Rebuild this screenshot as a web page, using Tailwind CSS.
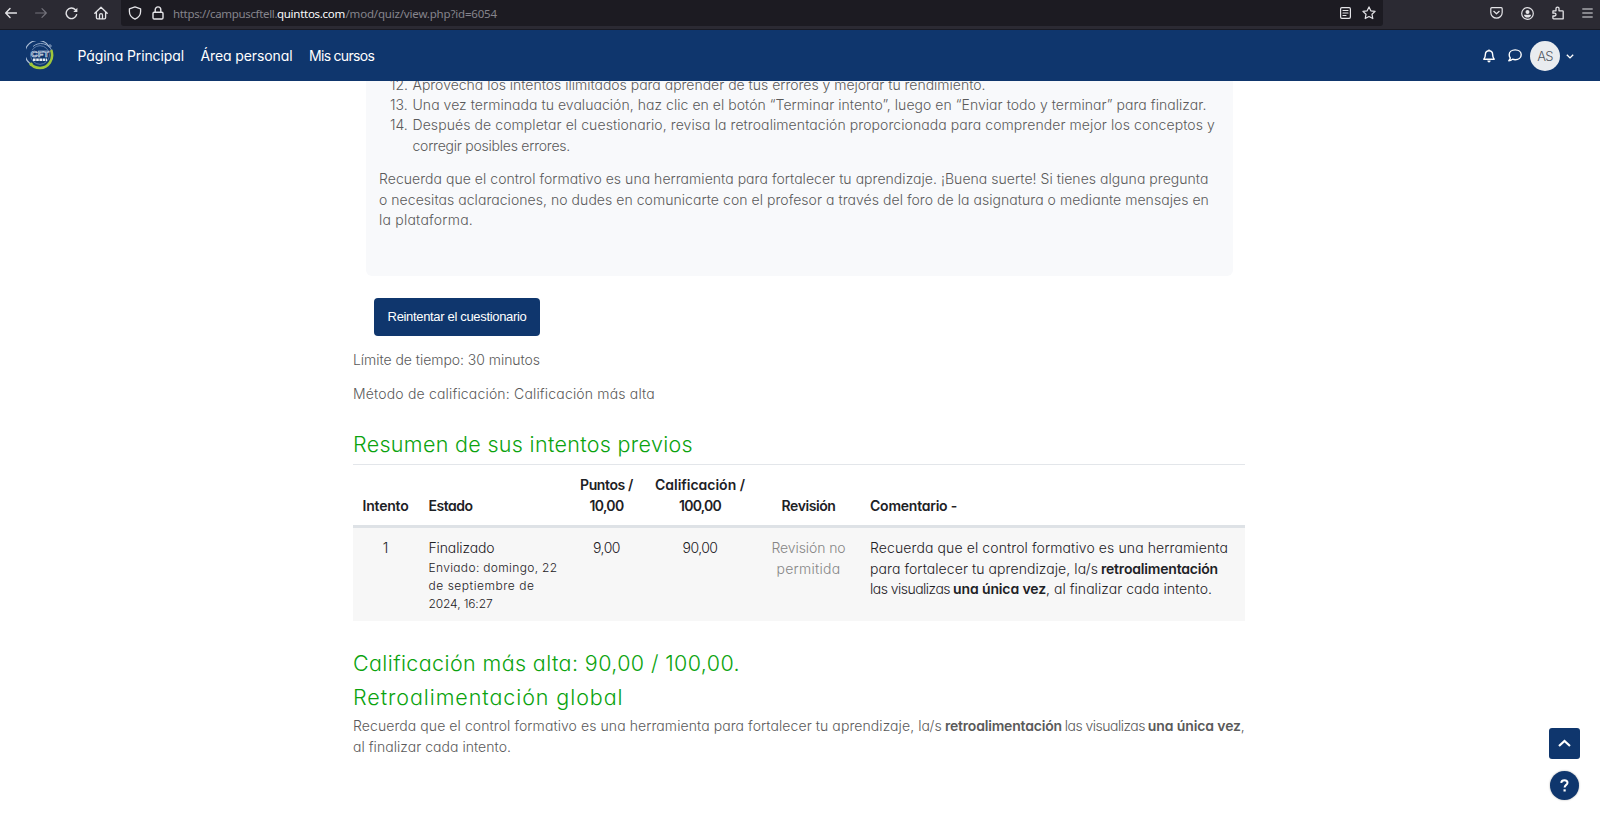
<!DOCTYPE html>
<html lang="es">
<head>
<meta charset="utf-8">
<title>Cuestionario</title>
<script src="https://cdn.jsdelivr.net/npm/@tailwindcss/browser@4"></script>
</head>
<body class="h-screen overflow-hidden flex flex-col bg-white font-['Inter',sans-serif] [font-feature-settings:'cv11'] text-[14px] leading-[20.3px] font-light text-[#5a5a5a] whitespace-nowrap">

<!-- Browser toolbar -->
<div class="h-[30px] shrink-0 bg-[#2b2a33] border-b border-[#1a1a22] flex items-start text-[#e4e4e8]">
  <div class="w-[121px] h-[26px] flex items-center shrink-0">
    <svg class="w-3 h-3 ml-[5px]" viewBox="0 0 12 12" fill="none" stroke="currentColor" stroke-width="1.4" stroke-linecap="round" stroke-linejoin="round"><path d="M11.4 6H.8M5 1.6L.7 6 5 10.4"/></svg>
    <svg class="w-3 h-3 ml-[18px] text-[#74737c]" viewBox="0 0 12 12" fill="none" stroke="currentColor" stroke-width="1.2" stroke-linecap="round" stroke-linejoin="round"><path d="M.6 6h10.6M7 1.6L11.3 6 7 10.4"/></svg>
    <svg class="w-[13px] h-[13px] ml-[18px]" viewBox="0 0 13 13" fill="none" stroke="currentColor" stroke-width="1.4" stroke-linecap="round"><path d="M11.6 7.6a5.3 5.3 0 1 1-1.2-4.9l.6.6"/><path d="M12.4.8v4.1H8.3z" fill="currentColor" stroke="none"/></svg>
    <svg class="w-[14px] h-[14px] ml-[16px]" viewBox="0 0 14 14" fill="none" stroke="currentColor" stroke-width="1.3" stroke-linecap="round" stroke-linejoin="round"><path d="M.8 7.2L7 1.2l6.2 6M2.4 6v5.6c0 .8.4 1.2 1.1 1.2h7c.7 0 1.1-.4 1.1-1.2V6"/><path d="M5.5 12.6V9.2c0-2 3-2 3 0v3.4"/></svg>
  </div>
  <div class="w-[1262px] h-[26px] bg-[#1c1b22] rounded-b-[3px] flex items-center shrink-0">
    <svg class="w-[14px] h-[14px] ml-[7px]" viewBox="0 0 14 14" fill="none" stroke="currentColor" stroke-width="1.3" stroke-linejoin="round"><path d="M7 .9l5.6 1.9v2.7c0 3.5-2.2 6.2-5.6 7.7C3.600 11.700 1.400 9 1.400 5.500V2.800z"/></svg>
    <svg class="w-[12px] h-[14px] ml-[10px]" viewBox="0 0 12 14" fill="none" stroke="currentColor" stroke-width="1.4"><rect x="1" y="6.300" width="10" height="6.700" rx="1.200"/><path d="M3.200 6.300V3.700a2.800 2.800 0 0 1 5.600 0v2.600"/></svg>
    <div class="ml-[9px] flex pt-px font-['Noto_Sans',sans-serif] font-normal text-[11.5px] leading-4 text-[#85848c]"><span class="w-[104px] tracking-[-0.33px]">https://campuscftell.</span><span class="w-[68.5px] tracking-[-0.28px] text-[#fbfbfe]">quinttos.com</span><span class="tracking-[-0.18px]">/mod/quiz/view.php?id=6054</span></div>
    <svg class="w-[11px] h-[12px] ml-auto" viewBox="0 0 11 12" fill="none" stroke="currentColor" stroke-width="1.2" stroke-linecap="round"><rect x=".6" y=".6" width="9.800" height="10.800" rx="1.300"/><path d="M3 3.500h5M3 6h5M3 8.500h3"/></svg>
    <svg class="w-[14px] h-[14px] ml-[11px] mr-[7px]" viewBox="0 0 14 14" fill="none" stroke="currentColor" stroke-width="1.200" stroke-linejoin="round"><path d="M7 .9l1.850 3.900 4.250.55-3.100 2.950.8 4.250L7 10.500l-3.800 2.050.8-4.250L.9 5.350l4.250-.55z"/></svg>
  </div>
  <div class="flex-1 h-[26px] flex items-center justify-end">
    <svg class="w-[13px] h-[12px]" viewBox="0 0 13 12" fill="none" stroke="currentColor" stroke-width="1.200" stroke-linecap="round" stroke-linejoin="round"><path d="M1.800.7h9.400c.6 0 1 .4 1 1v3.800a5.700 5.700 0 0 1-11.400 0V1.700c0-.6.4-1 1-1z"/><path d="M3.800 4.300l2.700 2.500 2.700-2.500"/></svg>
    <svg class="w-[13px] h-[13px] ml-[18px]" viewBox="0 0 13 13" fill="none" stroke="currentColor" stroke-width="1.200"><circle cx="6.500" cy="6.500" r="5.800"/><circle cx="6.500" cy="4.900" r="2" fill="currentColor" stroke="none"/><path d="M3 7.700h7c0 1.700-1.500 2.900-3.500 2.900S3 9.400 3 7.700z" fill="currentColor" stroke="none"/></svg>
    <svg class="w-[12px] h-[14px] ml-[18px]" viewBox="0 0 12 14" fill="none" stroke="currentColor" stroke-width="1.300" stroke-linejoin="round"><path d="M1 4.800h3V2.600a1.500 1.500 0 0 1 3 0v2.200h3.400c.5 0 .8.3.8.8v7.200H1.600c-.4 0-.7-.3-.7-.7V10h1.700a1.400 1.400 0 0 0 0-2.800H.9z"/></svg>
    <svg class="w-[11px] h-[10px] ml-[18px] mr-[7px]" viewBox="0 0 11 10" fill="none" stroke="currentColor" stroke-width="1.200"><path d="M.3 1h10.400M.3 5h10.400M.3 9h10.400"/></svg>
  </div>
</div>

<!-- Site navigation -->
<nav class="h-[51px] shrink-0 bg-[#0f366d] flex items-center text-white">
  <svg class="w-[28px] h-[30px] ml-[26px]" viewBox="0 0 28 30" fill="none"><path d="M23 5.500A13 13 0 1 0 4.500 23" stroke="#a9bbd4" stroke-width="1.200"/><path d="M25.800 9.500A12 12 0 0 0 7 5.500" stroke="#8fa6c6" stroke-width="1"/><circle cx="14" cy="14" r="9.300" stroke="#6f8cb4" stroke-width=".8"/><path d="M25.200 9c3.300 9.500-3 18-11.200 18-4.600 0-8-2-9.800-5" stroke="#9fc63b" stroke-width="2.600"/><circle cx="5.200" cy="23.400" r="1.700" fill="#9fc63b"/><circle cx="24" cy="5" r="1.200" stroke="#a9bbd4" stroke-width=".8"/><rect x="5" y="9" width="18" height="7.500" fill="#0f366d" opacity=".7"/><text x="5" y="16" fill="none" stroke="#d5deea" stroke-width=".7" font-family="Liberation Sans" font-weight="700" font-size="9" textLength="18">CFT</text><path d="M7 18.700h14" stroke="#e8edf4" stroke-width="2.600" stroke-dasharray="2.600 .6"/></svg>
  <a class="ml-[23.500px] w-[123px] pt-[2px] font-normal tracking-[-0.108px]">Página Principal</a>
  <a class="w-[108.5px] pt-[2px] font-normal tracking-[-0.108px]">Área personal</a>
  <a class="pt-[2px] font-normal tracking-[-0.7px]">Mis cursos</a>
  <svg class="w-[12px] h-[14px] ml-auto" viewBox="0 0 12 14" fill="none" stroke="currentColor" stroke-width="1.400" stroke-linejoin="round"><path d="M6 1.700c-2.300 0-3.600 1.600-3.600 3.600 0 2.600-.6 3.700-1.600 4.900h10.400c-1-1.200-1.600-2.300-1.600-4.900 0-2-1.300-3.600-3.600-3.600zM6 .4v1.300"/><path d="M4.300 11.600h3.400c-.2 1.300-.8 1.800-1.700 1.800s-1.500-.5-1.700-1.800z" fill="currentColor" stroke="none"/></svg>
  <svg class="w-[14px] h-[13px] ml-[13px]" viewBox="0 0 14 13" fill="none" stroke="currentColor" stroke-width="1.400" stroke-linejoin="round"><path d="M7.200.9c3.400 0 6 2.100 6 4.900s-2.600 4.900-6 4.900c-1 0-1.900-.2-2.700-.5-1 .8-2.200 1.400-3.700 1.500.8-.9 1.300-1.700 1.500-2.700-.7-.9-1.100-2-1.100-3.200C1.200 3 3.800.9 7.200.9z"/></svg>
  <div class="ml-[8px] w-[30px] h-[30px] rounded-full bg-[#e9ecef] text-[#4f5660] text-[13px] font-light tracking-[-0.8px] flex items-center justify-center pt-px">AS</div>
  <svg class="w-[8px] h-[5px] ml-[6px] mt-[2px] mr-[26px]" viewBox="0 0 8 5" fill="none" stroke="currentColor" stroke-width="1.400"><path d="M.8.8L4 3.900 7.200.8"/></svg>
</nav>

<main class="flex-1 overflow-hidden flex flex-col items-start pl-[353px]">
  <section class="shrink-0 -mt-[6.3px] ml-[13px] w-[867px] bg-[#f8f9fb] rounded-b-[6px] pl-[13px] pb-[45.4px]">
    <ol class="flex flex-col">
      <li class="flex"><span class="w-[33.5px] shrink-0 pl-[11px]">12.</span><span class="tracking-[-0.01px]">Aprovecha los intentos ilimitados para aprender de tus errores y mejorar tu rendimiento.</span></li>
      <li class="flex"><span class="w-[33.5px] shrink-0 pl-[11px]">13.</span><span class="tracking-[0.044px]">Una vez terminada tu evaluación, haz clic en el botón “Terminar intento”, luego en “Enviar todo y terminar” para finalizar.</span></li>
      <li class="flex"><span class="w-[33.5px] shrink-0 pl-[11px]">14.</span><span><span class="tracking-[0.081px]">Después de completar el cuestionario, revisa la retroalimentación proporcionada para comprender mejor los conceptos y</span><br><span class="tracking-[-0.234px]">corregir posibles errores.</span></span></li>
    </ol>
    <p class="mt-[13.4px]"><span class="tracking-[0.042px]">Recuerda que el control formativo es una herramienta para fortalecer tu aprendizaje. ¡Buena suerte! Si tienes alguna pregunta</span><br><span class="tracking-[0.049px]">o necesitas aclaraciones, no dudes en comunicarte con el profesor a través del foro de la asignatura o mediante mensajes en</span><br><span class="tracking-[0.227px]">la plataforma.</span></p>
  </section>

  <button class="shrink-0 mt-[22.3px] ml-[21px] w-[166px] h-[38px] rounded-[4px] bg-[#0f366d] text-white font-['Liberation_Sans',sans-serif] font-normal text-[13px] tracking-[-0.33px]">Reintentar el cuestionario</button>

  <p class="mt-[14.2px] tracking-[-0.046px]">Límite de tiempo: 30 minutos</p>
  <p class="mt-[13.3px] tracking-[0.172px]">Método de calificación: Calificación más alta</p>

  <h3 class="mt-[27.5px] text-[21.5px] leading-[26px] text-[#0ba30f] tracking-[0.317px]">Resumen de sus intentos previos</h3>

  <table class="mt-[6.4px] w-[892px] shrink-0 table-fixed border-collapse text-[#1d2125] text-center">
    <colgroup><col class="w-[65px]"><col class="w-[152px]"><col class="w-[73px]"><col class="w-[114px]"><col class="w-[103px]"><col class="w-[385px]"></colgroup>
    <thead class="align-bottom">
      <tr class="h-[62px] border-t border-[#e3e6ea] border-b-[3px] border-b-[#dee2e6]">
        <th class="pb-[9px] font-semibold tracking-[-0.2px]">Intento</th>
        <th class="pb-[9px] pl-[10.5px] font-semibold text-left tracking-[-0.5px]">Estado</th>
        <th class="pb-[9px] font-semibold"><span class="tracking-[-0.38px]">Puntos /</span><br><span class="tracking-[-0.67px]">10,00</span></th>
        <th class="pb-[9px] font-semibold"><span class="tracking-[-0.016px]">Calificación /</span><br><span class="tracking-[-0.76px]">100,00</span></th>
        <th class="pb-[9px] font-semibold tracking-[-0.41px]">Revisión</th>
        <th class="pb-[9px] pl-[10px] font-semibold text-left tracking-[-0.23px]">Comentario -</th>
      </tr>
    </thead>
    <tbody class="align-top">
      <tr class="h-[95px] bg-[#f7f7f7]">
        <td class="pt-[10.500px]">1</td>
        <td class="pt-[10.500px] pl-[10.5px] text-left"><span class="tracking-[-0.127px]">Finalizado</span><div class="mt-[0.5px] text-[12px] leading-[18px]"><span class="tracking-[0.333px]">Enviado: domingo, 22</span><br><span class="tracking-[0.524px]">de septiembre de</span><br><span class="tracking-[-0.116px]">2024, 16:27</span></div></td>
        <td class="pt-[10.500px] tracking-[-0.49px]">9,00</td>
        <td class="pt-[10.500px] tracking-[-0.52px]">90,00</td>
        <td class="pt-[10.500px] text-[#868686]"><span class="tracking-[-0.1px]">Revisión no</span><br><span class="tracking-[0.276px]">permitida</span></td>
        <td class="pt-[10.500px] pl-[10px] text-left"><div class="tracking-[0.105px]">Recuerda que el control formativo es una herramienta</div><div class="flex gap-[3px]"><span class="tracking-[0.073px]">para fortalecer tu aprendizaje, la/s</span><b class="font-semibold tracking-[-0.19px]">retroalimentación</b></div><div class="flex"><span class="tracking-[-0.529px] mr-[3px]">las visualizas</span><b class="font-semibold tracking-[-0.119px]">una única vez</b><span class="tracking-[0.039px]">, al finalizar cada intento.</span></div></td>
      </tr>
    </tbody>
  </table>

  <h3 class="mt-[28.3px] text-[21.5px] leading-[26px] text-[#0ba30f] tracking-[0.383px]">Calificación más alta: 90,00 / 100,00.</h3>
  <h3 class="mt-[8px] text-[21.5px] leading-[26px] text-[#0ba30f] tracking-[0.916px]">Retroalimentación global</h3>
  <div class="mt-[6.7px] flex gap-[3px]"><span class="tracking-[0.08px]">Recuerda que el control formativo es una herramienta para fortalecer tu aprendizaje, la/s</span><b class="font-semibold tracking-[-0.19px]">retroalimentación</b><span class="tracking-[-0.529px]">las visualizas</span><span><b class="font-semibold tracking-[-0.119px]">una única vez</b>,</span></div>
  <p class="tracking-[0.037px]">al finalizar cada intento.</p>
</main>

<!-- Floating buttons -->
<div class="fixed right-[20px] bottom-[25px] flex flex-col items-center gap-[12px]">
  <div class="w-[31px] h-[31px] rounded-[3px] bg-[#0f366d] flex items-center justify-center"><svg class="w-[13px] h-[8px] -mt-[2px]" viewBox="0 0 13 8" fill="none" stroke="#fff" stroke-width="2.200"><path d="M1 7l5.500-5L12 7"/></svg></div>
  <div class="w-[29px] h-[29px] rounded-full bg-[#0f366d] shadow-[0_0_2px_rgba(0,0,0,0.35)] flex items-center justify-center"><svg class="w-[9px] h-[13px]" viewBox="0 0 9 13" fill="none" stroke="#fff" stroke-width="2"><path d="M1.200 3.800C1.400 2 2.600 1.200 4.400 1.200c1.900 0 3.100.9 3.100 2.500 0 2.200-2.900 2.200-2.900 4.800"/><path d="M3.500 10.300h2.200v2.200H3.500z" fill="#fff" stroke="none"/></svg></div>
</div>
</body>
</html>
